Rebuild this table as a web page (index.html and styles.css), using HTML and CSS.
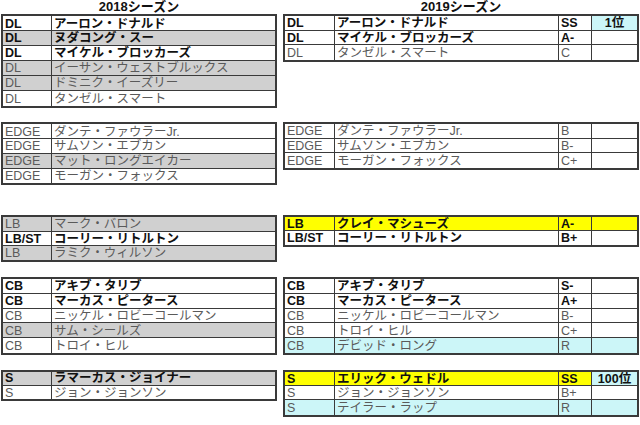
FILE: index.html
```html
<!DOCTYPE html>
<html lang="ja">
<head>
<meta charset="utf-8">
<title>2018 / 2019 シーズン</title>
<link rel="stylesheet" href="styles.css">
</head>
<body>
<div class="page">
  <div class="side left">
    <div class="title">2018シーズン</div>
    <div class="tbl n6">
      <div class="row b"><div class="c">DL</div><div class="c">アーロン・ドナルド</div></div>
      <div class="row b gray"><div class="c">DL</div><div class="c">ヌダコング・スー</div></div>
      <div class="row b"><div class="c">DL</div><div class="c">マイケル・ブロッカーズ</div></div>
      <div class="row gray"><div class="c">DL</div><div class="c">イーサン・ウェストブルックス</div></div>
      <div class="row gray"><div class="c">DL</div><div class="c">ドミニク・イーズリー</div></div>
      <div class="row"><div class="c">DL</div><div class="c">タンゼル・スマート</div></div>
    </div>
    <div class="tbl n4 g1">
      <div class="row"><div class="c">EDGE</div><div class="c">ダンテ・ファウラーJr.</div></div>
      <div class="row"><div class="c">EDGE</div><div class="c">サムソン・エブカン</div></div>
      <div class="row gray"><div class="c">EDGE</div><div class="c">マット・ロングエイカー</div></div>
      <div class="row"><div class="c">EDGE</div><div class="c">モーガン・フォックス</div></div>
    </div>
    <div class="tbl n3 g2">
      <div class="row gray"><div class="c">LB</div><div class="c">マーク・バロン</div></div>
      <div class="row b"><div class="c">LB/ST</div><div class="c">コーリー・リトルトン</div></div>
      <div class="row gray"><div class="c">LB</div><div class="c">ラミク・ウィルソン</div></div>
    </div>
    <div class="tbl n5 g1">
      <div class="row b"><div class="c">CB</div><div class="c">アキブ・タリブ</div></div>
      <div class="row b"><div class="c">CB</div><div class="c">マーカス・ピータース</div></div>
      <div class="row"><div class="c">CB</div><div class="c">ニッケル・ロビーコールマン</div></div>
      <div class="row gray"><div class="c">CB</div><div class="c">サム・シールズ</div></div>
      <div class="row"><div class="c">CB</div><div class="c">トロイ・ヒル</div></div>
    </div>
    <div class="tbl n2 g1">
      <div class="row b gray"><div class="c">S</div><div class="c">ラマーカス・ジョイナー</div></div>
      <div class="row"><div class="c">S</div><div class="c">ジョン・ジョンソン</div></div>
    </div>
  </div>

  <div class="side right">
    <div class="title">2019シーズン</div>
    <div class="tbl n3">
      <div class="row b"><div class="c">DL</div><div class="c">アーロン・ドナルド</div><div class="c">SS</div><div class="c rank cyan">1位</div></div>
      <div class="row b"><div class="c">DL</div><div class="c">マイケル・ブロッカーズ</div><div class="c">A-</div><div class="c rank"></div></div>
      <div class="row"><div class="c">DL</div><div class="c">タンゼル・スマート</div><div class="c">C</div><div class="c rank"></div></div>
    </div>
    <div class="tbl n3 g4">
      <div class="row"><div class="c">EDGE</div><div class="c">ダンテ・ファウラーJr.</div><div class="c">B</div><div class="c rank"></div></div>
      <div class="row"><div class="c">EDGE</div><div class="c">サムソン・エブカン</div><div class="c">B-</div><div class="c rank"></div></div>
      <div class="row"><div class="c">EDGE</div><div class="c">モーガン・フォックス</div><div class="c">C+</div><div class="c rank"></div></div>
    </div>
    <div class="tbl n2 g3">
      <div class="row b yellow"><div class="c">LB</div><div class="c">クレイ・マシューズ</div><div class="c">A-</div><div class="c rank"></div></div>
      <div class="row b"><div class="c">LB/ST</div><div class="c">コーリー・リトルトン</div><div class="c">B+</div><div class="c rank"></div></div>
    </div>
    <div class="tbl n5 g2">
      <div class="row b"><div class="c">CB</div><div class="c">アキブ・タリブ</div><div class="c">S-</div><div class="c rank"></div></div>
      <div class="row b"><div class="c">CB</div><div class="c">マーカス・ピータース</div><div class="c">A+</div><div class="c rank"></div></div>
      <div class="row"><div class="c">CB</div><div class="c">ニッケル・ロビーコールマン</div><div class="c">B-</div><div class="c rank"></div></div>
      <div class="row"><div class="c">CB</div><div class="c">トロイ・ヒル</div><div class="c">C+</div><div class="c rank"></div></div>
      <div class="row cyanrow"><div class="c">CB</div><div class="c">デビッド・ロング</div><div class="c">R</div><div class="c rank"></div></div>
    </div>
    <div class="tbl n3 g1">
      <div class="row b yellow"><div class="c">S</div><div class="c">エリック・ウェドル</div><div class="c">SS</div><div class="c rank cyan">100位</div></div>
      <div class="row"><div class="c">S</div><div class="c">ジョン・ジョンソン</div><div class="c">B+</div><div class="c rank"></div></div>
      <div class="row cyanrow"><div class="c">S</div><div class="c">テイラー・ラップ</div><div class="c">R</div><div class="c rank"></div></div>
    </div>
  </div>
</div>
</body>
</html>
```

FILE: styles.css
```css
:root {
  --r: 15.45px;
  --line: #3a3a3a;
}

html, body {
  margin: 0;
  background: #ffffff;
}

body {
  font-family: "Liberation Sans", "Noto Sans CJK JP", sans-serif;
  font-size: 12.5px;
  color: #111111;
}

.page {
  display: flex;
  gap: 6px;
  padding-left: 1px;
}

.side {
  display: flex;
  flex-direction: column;
}

.left {
  width: 276px;
}

.right {
  width: 356px;
}

.title {
  height: 14.3px;
  line-height: 14px;
  text-align: center;
  font-family: "Liberation Sans", "Noto Sans CJK JP", sans-serif;
  font-weight: bold;
  font-size: 13px;
  color: #111111;
}

.tbl {
  display: grid;
  grid-auto-rows: 1fr;
  border: 2px solid var(--line);
  box-sizing: border-box;
}

.left .tbl {
  grid-template-columns: 49px 1fr;
}

.right .tbl {
  grid-template-columns: 50px 224px 33px 1fr;
}

.n2 { height: calc(var(--r) * 2 + 1px); }
.n3 { height: calc(var(--r) * 3 + 1px); }
.n4 { height: calc(var(--r) * 4 + 1px); }
.n5 { height: calc(var(--r) * 5 + 1px); }
.n6 { height: calc(var(--r) * 6 + 1px); }

.g1 { margin-top: calc(var(--r) * 1 - 1px); }
.g2 { margin-top: calc(var(--r) * 2 - 1px); }
.g3 { margin-top: calc(var(--r) * 3 - 1px); }
.g4 { margin-top: calc(var(--r) * 4 - 1px); }

.row {
  display: contents;
}

.c {
  display: flex;
  align-items: center;
  padding-left: 2px;
  padding-top: 1px;
  border-right: 1px solid var(--line);
  border-bottom: 1px solid var(--line);
  white-space: nowrap;
  overflow: hidden;
  color: #5a5a5a;
  line-height: 1;
}

.c:last-child {
  border-right: 0;
}

.row:last-child > .c {
  border-bottom: 0;
}

.b > .c {
  font-weight: bold;
  color: #111111;
}

.gray > .c {
  background: #d0d0d0;
}

.yellow > .c {
  background: #ffff00;
}

.cyanrow > .c {
  background: #ccf6f8;
}

.row > .c.cyan {
  background: #ccf6f8;
}

.rank {
  justify-content: center;
  padding-left: 0;
}
```
